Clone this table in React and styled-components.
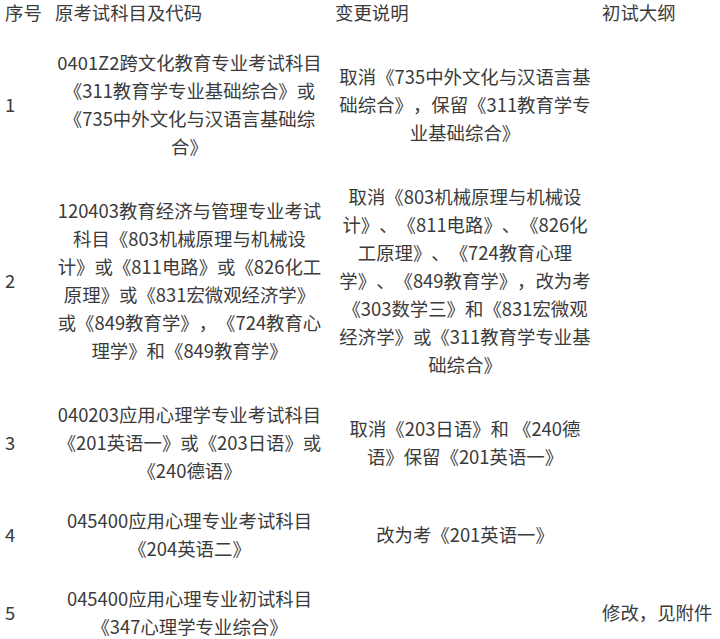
import styled, { createGlobalStyle } from 'styled-components'

const GlobalStyle = createGlobalStyle`
  body {
    margin: 0;
    background: #fff;
    font-family: "Noto Sans CJK SC", "Noto Sans", sans-serif;
  }
`

const columns = [
  { key: 'no', title: '序号', width: 50, align: 'left', pad: '11px 5px' },
  { key: 'orig', title: '原考试科目及代码', width: 280, align: 'center', pad: '11px 7px 11px 6px' },
  { key: 'change', title: '变更说明', width: 270, align: 'center', pad: '11px 5px' },
  { key: 'outline', title: '初试大纲', width: 120, align: 'left', pad: '11px 0 11px 2px' }
]

const rows = [
  {
    no: '1',
    orig: '0401Z2跨文化教育专业考试科目《311教育学专业基础综合》或《735中外文化与汉语言基础综合》',
    change: '取消《735中外文化与汉语言基础综合》，保留《311教育学专业基础综合》',
    outline: ''
  },
  {
    no: '2',
    orig: '120403教育经济与管理专业考试科目《803机械原理与机械设计》或《811电路》或《826化工原理》或《831宏微观经济学》或《849教育学》，《724教育心理学》和《849教育学》',
    change: '取消《803机械原理与机械设计》、《811电路》、《826化工原理》、《724教育心理学》、《849教育学》，改为考《303数学三》和《831宏微观经济学》或《311教育学专业基础综合》',
    outline: ''
  },
  {
    no: '3',
    orig: '040203应用心理学专业考试科目《201英语一》或《203日语》或《240德语》',
    change: '取消《203日语》和 《240德语》保留《201英语一》',
    outline: ''
  },
  {
    no: '4',
    orig: '045400应用心理专业考试科目《204英语二》',
    change: '改为考《201英语一》',
    outline: ''
  },
  {
    no: '5',
    orig: '045400应用心理专业初试科目《347心理学专业综合》',
    change: '',
    outline: '修改，见附件'
  }
]

export default function App() {
  return (
    <>
      <GlobalStyle />
      <Table>
        <colgroup>
          {columns.map((c) => (
            <col key={c.key} style={{ width: c.width }} />
          ))}
        </colgroup>
        <thead>
          <tr>
            {columns.map((c) => (
              <HeadCell key={c.key} $last={c.key === 'outline'}>
                {c.title}
              </HeadCell>
            ))}
          </tr>
        </thead>
        <tbody>
          {rows.map((r) => (
            <tr key={r.no}>
              {columns.map((c) => (
                <Cell key={c.key} $align={c.align} $pad={c.pad}>
                  {r[c.key]}
                </Cell>
              ))}
            </tr>
          ))}
        </tbody>
      </Table>
    </>
  )
}

const Table = styled.table`
  width: 720px;
  margin-top: -2px;
  table-layout: fixed;
  border-collapse: collapse;
  font-size: 18.4px;
  line-height: 28px;
  color: #3b3b3b;
  text-spacing-trim: space-all;
`

const HeadCell = styled.th`
  font-weight: normal;
  text-align: left;
  vertical-align: middle;
  padding: ${(p) => (p.$last ? '0 0 11px 2px' : '0 5px 11px')};
  white-space: nowrap;
`

const Cell = styled.td`
  text-align: ${(p) => p.$align};
  vertical-align: middle;
  padding: ${(p) => p.$pad};
`
